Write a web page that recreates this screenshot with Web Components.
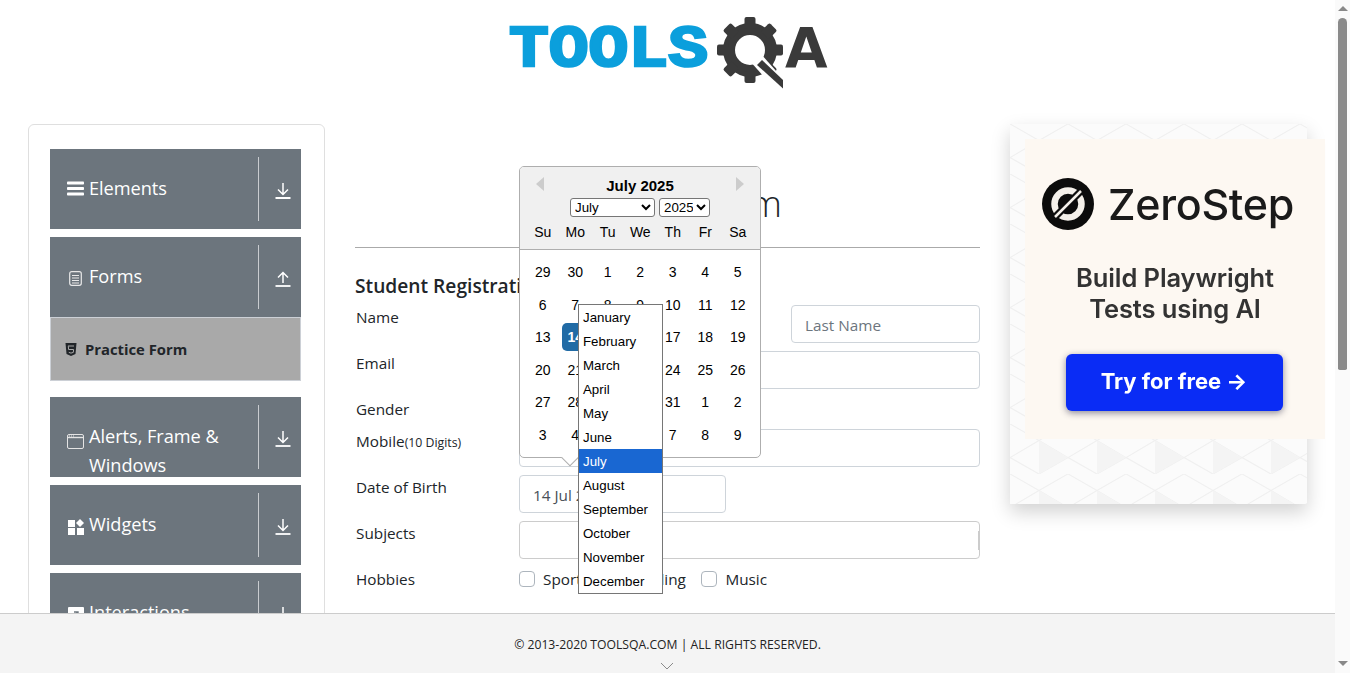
<!DOCTYPE html>
<html lang="en"><head><meta charset="utf-8"><title>ToolsQA</title>
<style>html,body{margin:0;padding:0;background:#fff;overflow:hidden}</style></head>
<body>
<tq-app></tq-app>
<script>
function def(name, html){
  customElements.define(name, class extends HTMLElement{
    constructor(){super();const t=document.createElement('template');t.innerHTML=html;this.attachShadow({mode:'open'}).appendChild(t.content.cloneNode(true));}
  });
}
const arrowDown='<svg width="16" height="16" viewBox="0 0 16 16" fill="none" stroke="#fff" stroke-width="1.5"><path d="M8 0v11M3 6.500l5 5 5-5"/><path d="M.5 15h15" stroke-width="1.800"/></svg>';
const arrowUp='<svg width="16" height="16" viewBox="0 0 16 16" fill="none" stroke="#fff" stroke-width="1.5"><path d="M8 12V1.500M3 6.500l5-5 5 5"/><path d="M.5 15h15" stroke-width="1.800"/></svg>';

def('tq-logo',`<style>:host{display:block;width:335px;height:100px;filter:blur(.25px)}svg{display:block}text{font-weight:700}</style>
<svg width="335" height="100" viewBox="0 0 335 100" role="img">
<text x="9" y="66" font-family="Liberation Mono, monospace" font-size="59" fill="#0b9fdc" stroke="#0b9fdc" stroke-width="2.500" textLength="199" lengthAdjust="spacingAndGlyphs">TOOLS</text>
<text x="285" y="67" font-family="DejaVu Sans, sans-serif" font-size="55" fill="#3a3a3a">A</text>
<g fill="#3a3a3a" transform="translate(250 50)">
<circle r="21" fill="none" stroke="#3a3a3a" stroke-width="12"/>
<rect x="-5.5" y="-33" width="11" height="12" rx="2"/>
<rect x="-5.5" y="-33" width="11" height="12" rx="2" transform="rotate(45)"/>
<rect x="-5.5" y="-33" width="11" height="12" rx="2" transform="rotate(90)"/>
<rect x="-5.5" y="-33" width="11" height="12" rx="2" transform="rotate(135)"/>
<rect x="-5.5" y="-33" width="11" height="12" rx="2" transform="rotate(180)"/>
<rect x="-5.5" y="-33" width="11" height="12" rx="2" transform="rotate(225)"/>
<rect x="-5.5" y="-33" width="11" height="12" rx="2" transform="rotate(270)"/>
<rect x="-5.5" y="-33" width="11" height="12" rx="2" transform="rotate(315)"/>
</g>
<path d="M255 57L287 93" stroke="#fff" stroke-width="13" fill="none"/>
<path d="M262 60L283 80V88.500L257 65Z" fill="#3a3a3a"/>
</svg>`);

def('tq-header',`<style>:host{display:flex;justify-content:center;height:124px;box-sizing:border-box}</style><tq-logo></tq-logo>`);

def('tq-nav-item',`<style>:host{display:flex;width:251px;height:80px;background:#6c757d;color:#fff;overflow:hidden;flex:none}
.l{flex:1;display:flex;gap:5px;padding:25px 0 0 17px;font-size:18.2px;line-height:28.8px;letter-spacing:-.04px;min-width:0}
.i{flex:none;width:17px;height:29px;display:flex;align-items:center;justify-content:center}
.r{flex:none;width:43px;height:64px;margin:8px 0;border-left:1px solid #c9ccd0;padding:26px 0 0 16px;box-sizing:border-box}
</style><div class="l"><span class="i"><slot name="icon"></slot></span><span><slot></slot></span></div><div class="r"><slot name="arrow"></slot></div>`);

def('tq-sub-item',`<style>:host{display:flex;align-items:center;gap:8px;width:251px;height:64px;box-sizing:border-box;background:#a9a9a9;border:1px solid #ccd0d6;padding:0 0 0 14px;margin-bottom:8px;color:#212529;font-weight:700;font-size:14.8px;flex:none}
</style><slot name="icon"></slot><span><slot></slot></span>`);

def('tq-sidebar',`<style>:host{display:flex;flex-direction:column;gap:8px;box-sizing:border-box;width:297px;height:560px;border:1px solid #dfdfdf;border-radius:6px;padding:24px 21px;flex:none;overflow:hidden}
.g{display:flex;flex-direction:column}
svg{display:block}</style>
<tq-nav-item><svg slot="icon" width="17" height="15" viewBox="0 0 17 15" fill="#fff"><rect y=".5" width="17" height="3" rx=".8"/><rect y="6" width="17" height="3" rx=".8"/><rect y="11.500" width="17" height="3" rx=".8"/></svg>Elements<span slot="arrow">${arrowDown}</span></tq-nav-item>
<div class="g">
<tq-nav-item><svg slot="icon" style="margin-top:4px" width="13" height="15" viewBox="0 0 13 15" fill="none" stroke="#e8e8e8"><rect x=".7" y=".7" width="11.600" height="13.600" rx="2" stroke-width="1.200"/><path d="M3 4.500h7M3 7h7M3 9.500h7M3 12h7" stroke-width="1"/></svg>Forms<span slot="arrow">${arrowUp}</span></tq-nav-item>
<tq-sub-item><svg slot="icon" width="12" height="13" viewBox="0 0 12 13"><path d="M.5 0h11l-1 11L6 13l-4.500-2z" fill="#212529"/><path d="M3 3h6M3.300 3.200l.3 3.300H8.600L8.300 9.400 6 10.100 3.800 9.400" fill="none" stroke="#a9a9a9" stroke-width="1"/></svg>Practice Form</tq-sub-item>
</div>
<tq-nav-item><svg slot="icon" style="margin-top:9px" width="17" height="15" viewBox="0 0 17 15" fill="none" stroke="#e4e4e4" stroke-width="1"><rect x=".5" y=".5" width="16" height="14" rx="1.500"/><path d="M.5 3.500h16" stroke-width="1.400"/><path d="M2 2h1M4 2h1M6 2h1" stroke-width="1"/></svg>Alerts, Frame &amp; Windows<span slot="arrow">${arrowDown}</span></tq-nav-item>
<tq-nav-item><svg slot="icon" style="margin-top:4px" width="16" height="16" viewBox="0 0 16 16" fill="#fff"><rect y="1" width="7" height="7"/><rect y="9" width="7" height="7"/><rect x="9" y="9" width="7" height="7"/><path d="M12 0l4 4-4 4-4-4z"/></svg>Widgets<span slot="arrow">${arrowDown}</span></tq-nav-item>
<tq-nav-item><svg slot="icon" style="margin-top:4px" width="16" height="15" viewBox="0 0 16 15" fill="#fff"><path d="M1 0h14a1 1 0 0 1 1 1v13a1 1 0 0 1-1 1H1a1 1 0 0 1-1-1V1a1 1 0 0 1 1-1z"/><path d="M5 10l5-5M6 5h4v4" stroke="#6c757d" stroke-width="1.400" fill="none"/></svg>Interactions<span slot="arrow">${arrowDown}</span></tq-nav-item>`);

def('tq-field',`<style>:host{display:grid;grid-template-columns:164px 1fr;color:#212529;font-size:15.300px;line-height:24px}
.lab{padding-left:1px}.ctl{display:flex;min-width:0}</style><div class="lab"><slot name="label"></slot></div><div class="ctl"><slot></slot></div>`);

def('tq-input',`<style>:host{display:block;flex:1;min-width:0}
input{display:block;width:100%;height:38px;box-sizing:border-box;border:1px solid #ced4da;border-radius:4px;padding:2px 13px 0;font:15.300px "Open Sans",sans-serif;color:#495057;background:#fff;outline:none}
input::placeholder{color:#6c757d;opacity:1}</style><input>`);

def('tq-check',`<style>:host{display:inline-flex;align-items:center;gap:8px;white-space:nowrap}
i{display:block;width:14px;height:14px;border:1px solid #adb5bd;border-radius:4px;background:#fff;flex:none}</style><i></i><slot></slot>`);

def('tq-subject',`<style>:host{display:flex;flex:1;justify-content:flex-end;align-items:center;height:38px;box-sizing:border-box;border:1px solid #ccc;border-radius:4px;background:#fff}
b{display:block;width:1px;height:19px;background:#ccc}</style><b></b>`);

def('tq-month-list',`<style>:host{display:block;position:absolute;left:58px;top:137px;width:85px;box-sizing:border-box;border:1px solid #767676;background:#fff;font:13.300px/26px "Liberation Sans",Arial,sans-serif;color:#000;z-index:3}
div{height:24px;padding-left:4px}.s{background:#1967d2;color:#fff}</style>
<div>January</div><div>February</div><div>March</div><div>April</div><div>May</div><div>June</div><div class="s">July</div><div>August</div><div>September</div><div>October</div><div>November</div><div>December</div>`);

const rows=[[29,30,1,2,3,4,5],[6,7,8,9,10,11,12],[13,14,15,16,17,18,19],[20,21,22,23,24,25,26],[27,28,29,30,31,1,2],[3,4,5,6,7,8,9]];
const months=['January','February','March','April','May','June','July','August','September','October','November','December'];
def('tq-datepicker',`<style>:host{display:block;position:absolute;left:164px;top:42px;width:242px;height:292px;box-sizing:border-box;border:1px solid #aeaeae;border-radius:5px;background:#fff;font:14px "Liberation Sans",Arial,sans-serif;color:#000;z-index:2}
.head{background:#f0f0f0;border-bottom:1px solid #aeaeae;border-radius:4px 4px 0 0;height:83px;box-sizing:border-box;padding-top:9px;display:flex;flex-direction:column;align-items:center}
.title{font-weight:700;font-size:15px;line-height:20px;height:20px}
.sel{display:flex;gap:4px;margin-top:2px;height:19px}
select{display:block;height:19px;padding:0;font:13.330px "Liberation Sans",Arial,sans-serif;color:#000;background:#fff;border:1px solid #767676;border-radius:3px;box-sizing:border-box}
.m{width:85px}.y{width:51px}
.grid{display:grid;grid-template-columns:repeat(7,32.500px);padding:0 6px 0 6.500px;justify-items:center;align-items:center;width:100%;box-sizing:border-box}
.names{height:28px;margin-top:1px}
.days{margin-top:6px;grid-auto-rows:32.500px}
.days span{display:block;width:27px;height:28px;line-height:28px;text-align:center}
.days .on{background:#216ba5;color:#fff;font-weight:700;border-radius:5px}
.nav{position:absolute;top:10px;width:0;height:0;border:7px solid transparent}
.p{left:16px;border-left:0;border-right:8px solid #ccc}.n{left:216px;border-right:0;border-left:8px solid #ccc}
.tip{position:absolute;left:44px;top:285px;width:12px;height:12px;background:#fff;border-right:1px solid #aeaeae;border-bottom:1px solid #aeaeae;transform:rotate(45deg);box-sizing:border-box}
</style>
<i class="nav p"></i><i class="nav n"></i><i class="tip"></i>
<div class="head"><div class="title">July 2025</div>
<div class="sel"><select class="m" aria-label="Month">${months.map(m=>`<option${m==='July'?' selected':''}>${m}</option>`).join('')}</select><select class="y" aria-label="Year"><option>2024</option><option selected>2025</option><option>2026</option></select></div>
<div class="grid names">${['Su','Mo','Tu','We','Th','Fr','Sa'].map(d=>`<span>${d}</span>`).join('')}</div></div>
<div class="grid days">${rows.flat().map((d,i)=>`<span${i===15?' class="on"':''}>${d}</span>`).join('')}</div>
<tq-month-list></tq-month-list>`);

def('tq-form',`<style>:host{display:block;position:relative;width:625px;flex:none;box-sizing:border-box;padding-top:55px;color:#212529}
h1{margin:0 0 20px;text-align:center;font-weight:300;font-size:37px;line-height:48px}
hr{margin:0 0 26px;border:0;border-top:1px solid #aaa}
h5{margin:0 0 7px;font-size:19.200px;line-height:24px;font-weight:600;padding-left:0}
.rows{display:flex;flex-direction:column;gap:8px}
small{font-size:12.300px}
.two{display:flex;gap:30px;flex:1}.ln{flex:none;width:189px}
.hob{display:flex;gap:15.500px}
.dob{flex:none;width:207px}
</style>
<h1>Practice Form</h1><hr><h5>Student Registration Form</h5>
<div class="rows">
<tq-field><span slot="label">Name</span><div class="two"><tq-input data-p="First Name"></tq-input><tq-input class="ln" data-p="Last Name"></tq-input></div></tq-field>
<tq-field><span slot="label">Email</span><tq-input data-p="name@example.com"></tq-input></tq-field>
<tq-field><span slot="label">Gender</span><div class="hob"><tq-check>Male</tq-check><tq-check>Female</tq-check><tq-check>Other</tq-check></div></tq-field>
<tq-field><span slot="label">Mobile<small>(10 Digits)</small></span><tq-input data-p="Mobile Number"></tq-input></tq-field>
<tq-field><span slot="label">Date of Birth</span><tq-input class="dob" data-v="14 Jul 2025"></tq-input></tq-field>
<tq-field><span slot="label">Subjects</span><tq-subject></tq-subject></tq-field>
<tq-field><span slot="label">Hobbies</span><div class="hob"><tq-check>Sports</tq-check><tq-check>Reading</tq-check><tq-check>Music</tq-check></div></tq-field>
</div>
<tq-datepicker></tq-datepicker>`);

const tri=encodeURIComponent('<svg xmlns="http://www.w3.org/2000/svg" width="58" height="50" viewBox="0 0 74 64"><path d="M0 0L37 21L0 43M74 0L37 21L74 43M0 43L37 64L74 43" fill="none" stroke="#f0f0f0" stroke-width="1.500"/><path d="M37 21L74 43L37 64z" fill="#f4f4f4"/></svg>');
def('tq-ad',`<style>:host{display:block;width:297px;height:380px;flex:none;box-shadow:0 8px 18px rgba(0,0,0,.18);background:#fbfbfb url("data:image/svg+xml,${tri}");font-family:Inter,sans-serif}
.c{width:300px;height:300px;margin:15px 0 0 15px;background:#fdf8f2;position:relative;display:flex;flex-direction:column;align-items:center;padding-top:39px;box-sizing:border-box;filter:blur(.35px)}
.logo{display:flex;align-items:center;gap:14px;align-self:flex-start;margin-left:17px;height:52px;font-size:43px;font-weight:500;color:#1a1a1a;letter-spacing:-.3px}
.t{margin-top:32px;text-align:center;font-size:25.500px;line-height:31px;font-weight:600;color:#333;letter-spacing:-.1px}
.b{margin:30px 2px 0 0;width:217px;height:57px;padding-bottom:4px;box-sizing:border-box;border-radius:6px;background:#0a2cf5;color:#fff;font-size:22px;font-weight:700;display:flex;align-items:center;justify-content:center;box-shadow:0 2px 7px rgba(0,0,40,.45)}
</style><div class="c">
<div class="logo"><svg width="52" height="52" viewBox="0 0 52 52"><circle cx="26" cy="26" r="26" fill="#0c0c0c"/><circle cx="26" cy="26" r="13.500" fill="none" stroke="#f4f0ea" stroke-width="6.500"/><path d="M10 42L42 10" stroke="#0c0c0c" stroke-width="7"/><path d="M13 39L39 13" stroke="#f4f0ea" stroke-width="2.500"/></svg><span>ZeroStep</span></div>
<div class="t">Build Playwright<br>Tests using AI</div>
<div class="b">Try for free →</div></div>`);

def('tq-footer',`<style>:host{position:absolute;left:0;right:0;bottom:0;height:60px;box-sizing:border-box;background:#f4f4f4;border-top:1px solid #ccc;display:flex;flex-direction:column;align-items:center;color:#222;font-size:12.200px;padding-top:21px;line-height:20px;z-index:5}
svg{display:block;margin:7px 2px 0 0}</style><slot></slot><svg width="14" height="8" viewBox="0 0 14 8" fill="none" stroke="#8a8a8a"><path d="M1 1l6 6 6-6"/></svg>`);

def('tq-scrollbar',`<style>:host{display:flex;flex-direction:column;align-items:center;width:15px;height:673px;background:#fafafa;flex:none;box-sizing:border-box;padding:6px 0 7px}
.tu,.td{width:0;height:0;border:5px solid transparent}.tu{border-top:0;border-bottom:5px solid #888}.td{border-bottom:0;border-top:5px solid #888;margin-top:auto}
.th{width:9px;height:352px;margin-top:7px;background:#8a8a8a;border-radius:5px 5px 2px 2px}</style><i class="tu"></i><i class="th"></i><i class="td"></i>`);

def('tq-page',`<style>:host{display:block;position:relative;width:1335px;height:673px;overflow:hidden;flex:none}
.main{display:flex;padding-left:28px;gap:30px;align-items:flex-start}</style>
<tq-header></tq-header>
<div class="main"><tq-sidebar></tq-sidebar><tq-form></tq-form><tq-ad></tq-ad></div>
<tq-footer>© 2013-2020 TOOLSQA.COM | ALL RIGHTS RESERVED.</tq-footer>`);

def('tq-app',`<style>:host{display:flex;width:1350px;height:673px;overflow:hidden;font-family:"Open Sans",sans-serif;color:#212529;background:#fff}</style>
<tq-page></tq-page><tq-scrollbar></tq-scrollbar>`);

function fill(root){root.querySelectorAll('*').forEach(e=>{if(e.shadowRoot){fill(e.shadowRoot);}
 if(e.tagName==='TQ-INPUT'){const i=e.shadowRoot.querySelector('input');if(e.dataset.p)i.placeholder=e.dataset.p;if(e.dataset.v)i.value=e.dataset.v;}});}
fill(document);
</script>
</body></html>
